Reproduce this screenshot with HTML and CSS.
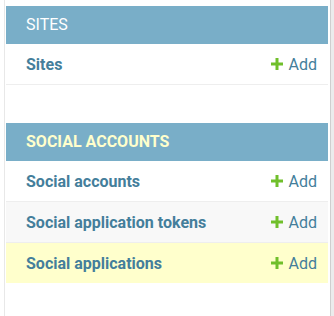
FILE: index.html
```html
<!DOCTYPE html>
<html>
<head>
<meta charset="utf-8">
<link rel="stylesheet" href="styles.css">
</head>
<body>
<div class="frame">
  <div class="gutter"></div>
  <nav class="sidebar">
    <div class="module">
      <div class="caption">Sites</div>
      <div class="row">
        <a class="model" href="#">Sites</a>
        <a class="add" href="#"><svg class="plus" viewBox="0 0 12 12" width="12" height="12"><path d="M4.5 0h3v4.5H12v3H7.5V12h-3V7.5H0v-3h4.5z" fill="#70bf2b"/></svg>Add</a>
      </div>
    </div>
    <div class="module">
      <div class="caption current">Social Accounts</div>
      <div class="row">
        <a class="model" href="#">Social accounts</a>
        <a class="add" href="#"><svg class="plus" viewBox="0 0 12 12" width="12" height="12"><path d="M4.5 0h3v4.5H12v3H7.5V12h-3V7.5H0v-3h4.5z" fill="#70bf2b"/></svg>Add</a>
      </div>
      <div class="row alt">
        <a class="model" href="#">Social application tokens</a>
        <a class="add" href="#"><svg class="plus" viewBox="0 0 12 12" width="12" height="12"><path d="M4.5 0h3v4.5H12v3H7.5V12h-3V7.5H0v-3h4.5z" fill="#70bf2b"/></svg>Add</a>
      </div>
      <div class="row selected">
        <a class="model" href="#">Social applications</a>
        <a class="add" href="#"><svg class="plus" viewBox="0 0 12 12" width="12" height="12"><path d="M4.5 0h3v4.5H12v3H7.5V12h-3V7.5H0v-3h4.5z" fill="#70bf2b"/></svg>Add</a>
      </div>
    </div>
  </nav>
  <div class="scroll"></div>
</div>
</body>
</html>
```

FILE: styles.css
```css
html, body {
  margin: 0;
  padding: 0;
  background: #fff;
}
body {
  font-family: Roboto, "Liberation Sans", sans-serif;
  font-size: 16px;
  color: #333;
}
.frame {
  display: flex;
  height: 316px;
  overflow: hidden;
}
.gutter {
  width: 4px;
  flex: none;
  border-right: 1px solid #e8e8e8;
}
.sidebar {
  flex: 1;
  margin-left: 1px;
  margin-right: 2px;
  padding-top: 6px;
}
.scroll {
  width: 3px;
  flex: none;
  background: #ececec;
  border-left: 1px solid #cfcfcf;
}
.module {
  margin-bottom: 38px;
}
.caption {
  background: #79aec8;
  color: #fff;
  text-transform: uppercase;
  height: 38px;
  line-height: 38px;
  padding-left: 20px;
  font-size: 16px;
}
.caption.current {
  color: #ffc;
  font-weight: bold;
}
.row {
  display: flex;
  align-items: center;
  justify-content: space-between;
  height: 40px;
  padding: 0 11px 0 20px;
  border-bottom: 1px solid #eee;
}
.row.alt {
  background: #f8f8f8;
}
.row.selected {
  background: #ffffcc;
  border-bottom: none;
}
.model {
  color: #447e9b;
  font-weight: bold;
  text-decoration: none;
}
.add {
  color: #447e9b;
  text-decoration: none;
  display: flex;
  align-items: center;
  gap: 6px;
}
.plus {
  display: block;
}
```
